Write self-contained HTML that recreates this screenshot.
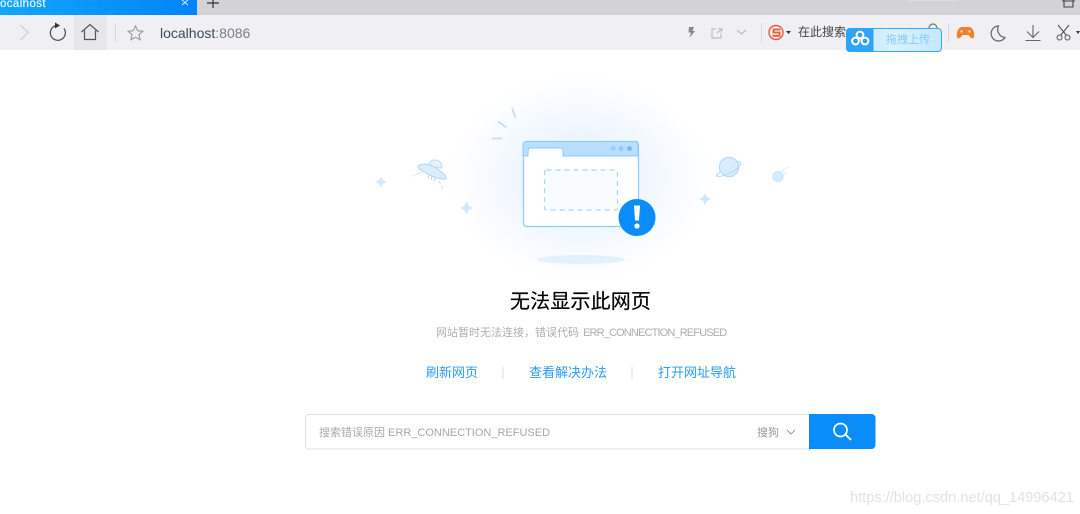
<!DOCTYPE html>
<html><head><meta charset="utf-8">
<style>
html,body{margin:0;padding:0;background:#fff;width:1080px;height:514px;overflow:hidden}
body{position:relative;font-family:"Liberation Sans","Noto Sans CJK SC",sans-serif}
.a{position:absolute;white-space:nowrap}
svg{position:absolute;left:0;top:0}
</style></head>
<body>
<div class="a" style="left:0;top:0;width:1080px;height:15px;background:#d3d2d6"></div>
<div class="a" style="left:0;top:0;width:197px;height:15px;background:linear-gradient(90deg,#12a6fb,#0083fb)"></div>
<div class="a" style="left:-3px;top:-3px;font-size:11.5px;line-height:14px;letter-spacing:.4px;color:#e8f6ff;-webkit-text-stroke:.2px #e8f6ff">localhost</div>
<div class="a" style="left:0;top:15px;width:1080px;height:35px;background:#efeff4"></div>
<div class="a" style="left:74px;top:15px;width:33px;height:35px;background:#e7e7eb"></div>
<div class="a" style="left:160px;top:24px;font-size:14px;line-height:18px;color:#3d4a58">localhost<span style="color:#7a7f88">:8086</span></div>
<div class="a" style="left:798px;top:24px;font-size:12px;line-height:17px;color:#444">在此搜索</div>
<svg width="1080" height="514" viewBox="0 0 1080 514" fill="none">
<defs>
<radialGradient id="g"><stop offset="0" stop-color="#dcedff"/><stop offset=".45" stop-color="#eef6ff"/><stop offset=".75" stop-color="#f8fbff"/><stop offset="1" stop-color="#fff"/></radialGradient>
<linearGradient id="u" x1="0" x2="1" y1="0" y2="0"><stop offset="0" stop-color="#bfe6ff"/><stop offset=".5" stop-color="#d8f2ff"/><stop offset="1" stop-color="#c2e8ff"/></linearGradient>
</defs>
<ellipse cx="580" cy="178" rx="132" ry="104" fill="url(#g)"/>
<!-- tab chrome -->
<path d="M182 0l6 5M188 0l-6 5" stroke="#cfeaff" stroke-width="1"/>
<path d="M213 -3V8M207 3H219" stroke="#333" stroke-width="1.2"/>
<path d="M1064 0V7H1073V0M1062 1H1075" stroke="#444" stroke-width="1.100"/>
<rect x="908" y="0" width="50" height="1" fill="#dddde0"/>
<!-- nav -->
<path d="M20.500 25l7.500 7.500-7.500 7.500" stroke="#d2d2d6" stroke-width="1.300"/>
<path d="M59.500 25.500a7.500 7.500 0 1 0 4.500 3" stroke="#555" stroke-width="1.300"/><path d="M55 22.500l5 3-5 3z" fill="#333"/>
<path d="M81.500 32l8.500-7.500 8.500 7.500M84.500 30.500v9h11v-9" stroke="#555" stroke-width="1.200"/>
<path d="M115.500 23v19" stroke="#d8d8dc"/>
<path d="M135.500 26l2.200 4.700 5.100.6-3.800 3.400 1.100 5-4.600-2.500-4.600 2.500 1.100-5-3.800-3.400 5.100-.6z" stroke="#999" stroke-width="1.100"/>
<!-- right toolbar -->
<path d="M689 27h5l-1.500 4h2.500l-5.500 7 1.500-5.500h-2.500z" fill="#888"/>
<path d="M716 29h-4v9h9v-4M717 33l4-3.500M718.500 28.500l3.500.7-.8 3.500" stroke="#b4b4b8"/>
<path d="M737 30l4.500 4 4.500-4" stroke="#b4b4b8" stroke-width="1.100"/>
<path d="M761.500 23v19" stroke="#ddd"/>
<circle cx="776" cy="32.500" r="7" stroke="#ea5a33" stroke-width="1.400"/>
<path d="M780.500 29.500h-7v3h6v3.300h-7" stroke="#ea5a33" stroke-width="1.800"/>
<path d="M786 31h5l-2.500 3z" fill="#333"/>
<circle cx="933" cy="28" r="4" stroke="#777" stroke-width="1.200"/>
<path d="M948.500 23v19" stroke="#d8d8dc"/>
<path d="M957 37c-1-5 1.500-10 5-10h7c3.500 0 6 5 5 10-.5 2-2.500 1.500-3.500.5l-2-2.500h-6l-2 2.500c-1 1-3 1.500-3.500-.5z" fill="#f0812d"/>
<circle cx="961.500" cy="31.500" r="1.200" fill="#fde3cf"/><circle cx="969.500" cy="31.500" r="1.200" fill="#fde3cf"/>
<path d="M998.500 26a7.500 7.500 0 1 0 6.500 11.500a8 8 0 0 1-6.500-11.500z" stroke="#666" stroke-width="1.200"/>
<path d="M1033 25v12M1027 31.500l6 6 6-6M1025.500 40.500h15" stroke="#666" stroke-width="1.100"/>
<path d="M1058 25l8.500 10.500M1069 25l-8.500 10.500" stroke="#555" stroke-width="1.100"/>
<circle cx="1059.500" cy="37.500" r="2.500" stroke="#555"/><circle cx="1067.500" cy="37.500" r="2.500" stroke="#555"/>
<path d="M1076 31h4l-2 3z" fill="#333"/>
<!-- upload widget -->
<rect x="846.500" y="28.500" width="95" height="23" rx="3.500" fill="url(#u)" stroke="#3aa6f6"/>
<path d="M850 28h23.500v24h-23.500a4 4 0 0 1-4-4v-16a4 4 0 0 1 4-4z" fill="#2ea3f7"/>
<circle cx="860" cy="35" r="3.400" stroke="#fff" stroke-width="2"/>
<circle cx="855.500" cy="41" r="3.400" stroke="#fff" stroke-width="2"/>
<circle cx="865" cy="41" r="3.400" stroke="#fff" stroke-width="2"/>
<!-- window illustration -->
<rect x="523.500" y="141.500" width="115" height="85" rx="3" fill="#fff" stroke="#8ecbfd" stroke-width="1.200"/>
<path d="M527 141.500h108a3 3 0 0 1 3 3v11.500h-75v-5a3 3 0 0 0-3-3h-29a3 3 0 0 0-3 3v5h-5v-11.500a3 3 0 0 1 3-3z" fill="#b9defe" stroke="#8ecbfd"/>
<circle cx="613" cy="148.500" r="2.500" fill="#9cd0fb"/><circle cx="621" cy="148.500" r="2.500" fill="#8fcafb"/><circle cx="629.500" cy="148.500" r="2.500" fill="#74bdfb"/>
<rect x="544.500" y="170" width="73" height="40" rx="2" fill="#f8fcff" stroke="#a6d6fd" stroke-width="1.200" stroke-dasharray="5 4"/>
<circle cx="637" cy="217.500" r="18.500" fill="#0a8dfb"/>
<path d="M634.500 206h5l-1 14h-3z" fill="#fff" stroke="#fff" stroke-linejoin="round"/>
<circle cx="637" cy="226" r="2.600" fill="#fff"/>
<ellipse cx="581" cy="259.500" rx="44" ry="4.500" fill="#e3f1fc"/>
<!-- rays -->
<path d="M512 108l3.500 10M498 121.500l8.500 6M492 138.500h10" stroke="#bfe0fb" stroke-width="1.800"/>
<!-- sparkles -->
<path d="M381 177.500l1.500 3 3 1.500-3 1.500-1.500 3-1.500-3-3-1.500 3-1.500z" fill="#d3e9fc" stroke="#d3e9fc" stroke-linejoin="round"/>
<path d="M466.500 202.500l1.700 3.800 3.800 1.700-3.800 1.700-1.700 3.800-1.700-3.800-3.800-1.700 3.800-1.700z" fill="#cfe7fc" stroke="#cfe7fc" stroke-linejoin="round"/>
<path d="M705 194l1.600 3.400 3.400 1.600-3.400 1.600-1.600 3.400-1.600-3.400-3.400-1.600 3.400-1.600z" fill="#cfe7fc" stroke="#cfe7fc" stroke-linejoin="round"/>
<!-- ufo -->
<path d="M429 167c-1-5 3-7.500 7-7 4 .5 6 4 6 8z" fill="#e6f3fe" stroke="#b9dffb"/>
<path d="M421 164.500c4-1.500 10 .5 15 3.500 4 2.500 9 6 10 9 .5 2-1 2.500-4 2-5-.5-11-3-16-6-4-2-8-4.500-8-6.500 0-1 1.500-1.500 3-2z" fill="#dceefd" stroke="#a8d5fb"/>
<path d="M413 176l2-.8M416.500 174.500l4-1.700M439 181l1.500 3M441.500 186l1.500 3" stroke="#c3e2fb"/>
<path d="M429 175l-1 3.500M432 176.500l-1 3.500M435 177.500l-.5 3.500" stroke="#a8d5fb"/>
<!-- planet -->
<circle cx="729" cy="167" r="9.700" fill="#d7ecfe" stroke="#add8fc"/>
<path d="M720 172c-3 2-4 3.500-3 4 2.500 1 9-.5 15-4s9.500-7.500 8.500-9.500c-.5-.8-2-1-3.500-.7" stroke="#a8d5fb"/>
<!-- comet -->
<circle cx="778" cy="176.500" r="5" fill="#d7ecfe" stroke="#c4e2fb"/>
<path d="M781.500 172l3-3.500M783.500 175l3-2M786 168.500l1.500-1.500" stroke="#dceefd" stroke-width="1.500"/>
<!-- links sep -->
<path d="M503 367v12M632 367v12" stroke="#dcdcdc"/>
<!-- search -->
<path d="M809 414h62a4 4 0 0 1 4.500 4v27a4 4 0 0 1-4.500 4h-62z" fill="#0a8dfb"/>
<rect x="305.500" y="414.500" width="504" height="34.500" rx="3" stroke="#e2e2e2"/>
<path d="M809 414v35.500h1V414z" fill="#0a8dfb"/>
<circle cx="840.500" cy="430" r="6.500" stroke="#fff" stroke-width="1.700"/>
<path d="M845.500 434.500l5.500 5.500" stroke="#fff" stroke-width="1.900"/>
<path d="M787 430l4 4 4-4" stroke="#999"/>
</svg>
<div class="a" style="left:874px;top:33px;width:68px;text-align:center;font-size:11px;line-height:15px;color:#86c9f8">拖拽上传</div>
<div class="a" style="left:510px;top:289px;font-size:20px;line-height:26px;letter-spacing:.15px;color:#000;-webkit-text-stroke:.2px #000">无法显示此网页</div>
<div class="a" style="left:436px;top:325px;font-size:11px;line-height:16px;color:#adadad">网站暂时无法连接，错误代码 <span style="font-size:11px;letter-spacing:-.85px;margin-left:1px">ERR_CONNECTION_REFUSED</span></div>
<div class="a" style="left:426px;top:364px;font-size:13px;line-height:18px;color:#2a9bf6">刷新网页</div>
<div class="a" style="left:529px;top:364px;font-size:13px;line-height:18px;color:#2a9bf6">查看解决办法</div>
<div class="a" style="left:658px;top:364px;font-size:13px;line-height:18px;color:#2a9bf6">打开网址导航</div>
<div class="a" style="left:319px;top:425px;font-size:11px;line-height:17px;color:#a8a8a8">搜索错误原因 ERR_CONNECTION_REFUSED</div>
<div class="a" style="left:757px;top:425px;font-size:11px;line-height:17px;color:#999">搜狗</div>
<div class="a" style="left:850px;top:489px;font-size:14.600px;line-height:18px;color:#e2e2e2">https://blog.csdn.net/qq_14996421</div>
</body></html>
